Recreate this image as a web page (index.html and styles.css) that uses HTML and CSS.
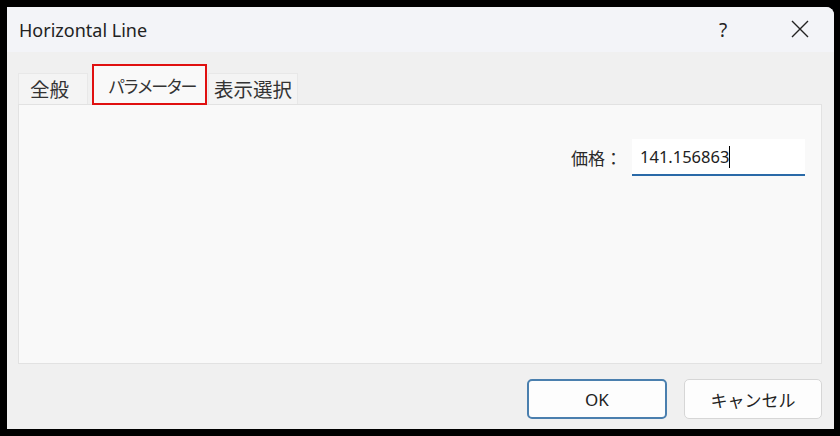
FILE: index.html
```html
<!DOCTYPE html>
<html lang="ja">
<head>
    <meta charset="UTF-8">
    <title>Horizontal Line</title>
    <link rel="stylesheet" href="styles.css">
</head>
<body>
    <div class="window">
        <div class="titlebar">
            <span class="title">Horizontal Line</span>
            <span class="help">?</span>
            <span class="close">
                <svg width="18" height="18" viewBox="0 0 18 18"><path d="M1 1L17 17M17 1L1 17" stroke="#222" stroke-width="1.4" fill="none"/></svg>
            </span>
        </div>

        <div class="body">
            <div class="tabs">
                <div class="tab first">全般</div>
                <div class="tab active">パラメーター</div>
                <div class="tab last">表示選択</div>
            </div>

            <div class="panel">
                <div class="field">
                    <label>価格：</label>
                    <div class="input">141.156863<span class="caret"></span></div>
                </div>
            </div>

            <div class="buttons">
                <button class="btn primary">OK</button>
                <button class="btn">キャンセル</button>
            </div>
        </div>
    </div>
</body>
</html>
```

FILE: styles.css
```css
body {
    margin: 0;
    background-color: #000;
    font-family: "Noto Sans", "Noto Sans CJK JP", sans-serif;
    color: #1a1a1a;
}

.window {
    margin: 7px 0 0 7px;
    width: 827px;
    height: 422px;
    background-color: #f0f0f0;
    border-top-right-radius: 8px;
    overflow: hidden;
    display: flex;
    flex-direction: column;
}

.titlebar {
    height: 45px;
    background-color: #f3f4f8;
    display: flex;
    align-items: center;
    padding-left: 12px;
}

.title {
    font-size: 18px;
    flex: 1;
    color: #222;
}

.help {
    font-size: 19px;
    width: 30px;
    margin-right: 42px;
    color: #222;
}

.close {
    width: 18px;
    height: 18px;
    margin-right: 25px;
    margin-bottom: 2px;
}

.body {
    flex: 1;
    padding: 12px 12px 0 11px;
    display: flex;
    flex-direction: column;
}

.tabs {
    display: flex;
    align-items: flex-end;
    height: 40px;
}

.tab {
    font-size: 19.5px;
    color: #333;
    background-color: #f4f4f4;
    border: 1px solid #e8e8e8;
    border-bottom: none;
    height: 31px;
    line-height: 31px;
    padding: 0 0 0 5px;
    box-sizing: border-box;
}

.tab.first {
    width: 70px;
    padding-left: 11px;
}

.tab.last {
    width: 90px;
}

.tab.active {
    width: 115px;
    font-size: 17px;
    letter-spacing: -2.4px;
    background-color: #f9f9f9;
    border: 2px solid #e01010;
    height: 41px;
    line-height: 42px;
    padding: 0 0 0 14px;
    margin: 0 1px 0 4px;
    position: relative;
    top: 1px;
}

.panel {
    height: 260px;
    background-color: #f9f9f9;
    border: 1px solid #e2e2e2;
    display: flex;
    justify-content: flex-end;
    padding-top: 34px;
    padding-right: 16px;
    box-sizing: border-box;
}

.field {
    display: flex;
    align-items: center;
    height: 37px;
}

.field label {
    font-size: 17px;
    color: #2a2a2a;
    margin-right: 10px;
}

.input {
    width: 173px;
    height: 37px;
    box-sizing: border-box;
    background-color: #fff;
    border-bottom: 2px solid #2a6aa8;
    font-size: 16.5px;
    line-height: 35px;
    padding-left: 8px;
    color: #222;
    display: flex;
    align-items: center;
}

.caret {
    display: inline-block;
    width: 1px;
    height: 22px;
    background-color: #000;
}

.buttons {
    display: flex;
    justify-content: flex-end;
    gap: 17px;
    margin-top: 15px;
}

.btn {
    width: 138px;
    height: 40px;
    background-color: #fdfdfd;
    border: 1px solid #d6d6d6;
    border-radius: 5px;
    font-family: "Noto Sans", "Noto Sans CJK JP", sans-serif;
    font-size: 17px;
    color: #222;
}

.btn.primary {
    width: 140px;
    border: 2px solid #4a7fae;
}
```
